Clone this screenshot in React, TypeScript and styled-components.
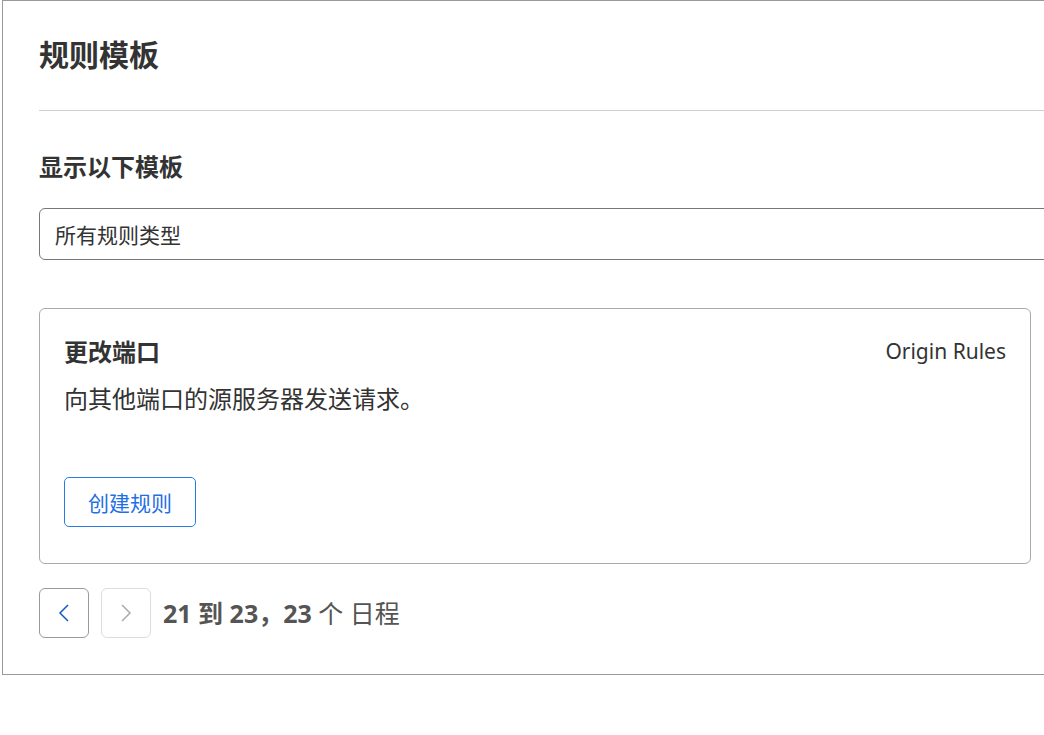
import React from 'react';
import styled, { createGlobalStyle } from 'styled-components';

const GlobalStyle = createGlobalStyle`
  html, body {
    margin: 0;
    padding: 0;
    background: #fff;
    overflow: hidden;
  }
  body {
    font-family: "Noto Sans", "Noto Sans CJK SC", sans-serif;
    color: #333;
  }
`

const Panel = styled.section`
  box-sizing: border-box;
  width: 1120px;
  margin-left: 2px;
  border: 1px solid #999;
  padding: 36px 0 36px 36px;
`

const Title = styled.h1`
  margin: 0;
  font-size: 30px;
  line-height: 36px;
  font-weight: 700;
  color: #333;
`

const Divider = styled.hr`
  margin: 37px 0 0;
  border: 0;
  height: 1px;
  background: #cfcfcf;
`

const SubTitle = styled.h2`
  margin: 41px 0 0;
  font-size: 24px;
  line-height: 30px;
  font-weight: 700;
  color: #333;
`

const Select = styled.div`
  box-sizing: border-box;
  margin-top: 26px;
  height: 52px;
  border: 1px solid #777;
  border-radius: 6px;
  padding: 0 15px;
  display: flex;
  align-items: center;
  font-size: 21px;
  color: #333;
`

const Card = styled.div`
  box-sizing: border-box;
  width: 992px;
  margin-top: 48px;
  border: 1px solid #aaa;
  border-radius: 6px;
  padding: 28px 24px 36px;
`

const CardHeader = styled.div`
  display: flex;
  justify-content: space-between;
  align-items: flex-start;
`

const CardTitle = styled.h3`
  margin: 0;
  font-size: 24px;
  line-height: 30px;
  font-weight: 700;
  color: #333;
`

const Product = styled.span`
  font-size: 21px;
  line-height: 28px;
  color: #333;
`

const Description = styled.p`
  margin: 17px 0 0;
  font-size: 24px;
  line-height: 30px;
  color: #333;
`

const OutlineButton = styled.button`
  box-sizing: border-box;
  margin-top: 63px;
  height: 50px;
  width: 132px;
  border: 1px solid #2b7be4;
  border-radius: 5px;
  background: #fff;
  color: #1f6fe5;
  font-family: inherit;
  font-size: 21px;
  cursor: pointer;
`

const Pager = styled.div`
  display: flex;
  align-items: center;
  gap: 12px;
  margin-top: 24px;
`

const PageButton = styled.button<{ disabled?: boolean }>`
  box-sizing: border-box;
  width: 50px;
  height: 50px;
  border: 1px solid ${(p) => (p.disabled ? '#ddd' : '#999')};
  border-radius: 6px;
  background: #fff;
  display: flex;
  align-items: center;
  justify-content: center;
  padding: 0;
  color: ${(p) => (p.disabled ? '#aaa' : '#1359c9')};
`

const PageText = styled.span`
  font-size: 25px;
  line-height: 30px;
  color: #555;

  b {
    font-weight: 700;
  }
`

const Chevron = ({ dir }: { dir: 'left' | 'right' }) => (
  <svg width="12" height="20" viewBox="0 0 12 20" fill="none" stroke="currentColor" strokeWidth="1.5">
    {dir === 'left' ? <polyline points="10 2 2 10 10 18" /> : <polyline points="2 2 10 10 2 18" />}
  </svg>
)

export default function App() {
  return (
    <>
      <GlobalStyle />
      <Panel>
        <Title>规则模板</Title>
        <Divider />
        <SubTitle>显示以下模板</SubTitle>
        <Select>所有规则类型</Select>
        <Card>
          <CardHeader>
            <CardTitle>更改端口</CardTitle>
            <Product>Origin Rules</Product>
          </CardHeader>
          <Description>向其他端口的源服务器发送请求。</Description>
          <OutlineButton>创建规则</OutlineButton>
        </Card>
        <Pager>
          <PageButton>
            <Chevron dir="left" />
          </PageButton>
          <PageButton disabled>
            <Chevron dir="right" />
          </PageButton>
          <PageText>
            <b>21 到 23，23</b> 个 日程
          </PageText>
        </Pager>
      </Panel>
    </>
  );
}
